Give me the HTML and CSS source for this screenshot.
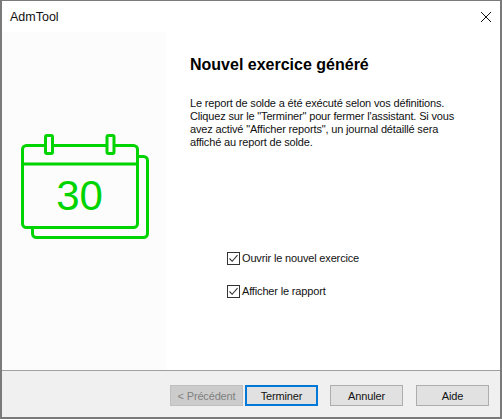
FILE: index.html
```html
<!DOCTYPE html>
<html>
    <head>
        <meta charset="utf-8">
        <title>AdmTool</title>
        <link rel="stylesheet" href="styles.css">
    </head>
    <body>
        <div class="window">
            <div class="titlebar">
                <span class="title">AdmTool</span>
                <svg class="close" width="10" height="10" viewBox="0 0 10 10">
                    <path d="M0 0L10 10M10 0L0 10" stroke="#111" stroke-width="1" fill="none"/>
                </svg>
            </div>
            <div class="content">
                <div class="side">
                    <svg class="calendar" width="129" height="106" viewBox="0 0 129 106">
                        <path d="M11.5 94v5.500a4 4 0 0 0 4 4h107a4 4 0 0 0 4-4V26.500a4 4 0 0 0-4-4H117" fill="none" stroke="#00d400" stroke-width="3"/>
                        <rect x="1.500" y="11.500" width="115" height="82" rx="4" fill="none" stroke="#00d400" stroke-width="3"/>
                        <path d="M1.500 30H116.500" stroke="#00d400" stroke-width="3"/>
                        <rect x="24.500" y="1.500" width="7" height="18" rx="1.500" fill="#fcfcfc" stroke="#00d400" stroke-width="3"/>
                        <rect x="86" y="1.500" width="7" height="18" rx="1.500" fill="#fcfcfc" stroke="#00d400" stroke-width="3"/>
                        <text class="day" x="58.500" y="76" text-anchor="middle">30</text>
                    </svg>
                </div>
                <div class="main">
                    <h1>Nouvel exercice généré</h1>
                    <p>Le report de solde a été exécuté selon vos définitions.<br>Cliquez sur le "Terminer" pour fermer l'assistant. Si vous<br>avez activé "Afficher reports", un journal détaillé sera<br>affiché au report de solde.</p>
                    <div class="options">
                        <label class="check">
                            <svg width="13" height="13" viewBox="0 0 13 13">
                                <rect x="0.5" y="0.5" width="12" height="12" fill="#fff" stroke="#333"/>
                                <path d="M2.5 6.5L5.2 9.300L10.500 3.200" fill="none" stroke="#333" stroke-width="1.100"/>
                            </svg>
                            Ouvrir le nouvel exercice
                        </label>
                        <label class="check">
                            <svg width="13" height="13" viewBox="0 0 13 13">
                                <rect x="0.5" y="0.5" width="12" height="12" fill="#fff" stroke="#333"/>
                                <path d="M2.5 6.5L5.2 9.300L10.500 3.200" fill="none" stroke="#333" stroke-width="1.100"/>
                            </svg>
                            Afficher le rapport
                        </label>
                    </div>
                </div>
            </div>
            <div class="footer">
                <button class="btn disabled">&lt; Précédent</button>
                <button class="btn default">Terminer</button>
                <button class="btn cancel">Annuler</button>
                <button class="btn">Aide</button>
            </div>
        </div>
    </body>
</html>
```

FILE: styles.css
```css
html, body{
    margin: 0;
    height: 100%;
    background-color: #fff;
}
.window{
    box-sizing: border-box;
    width: 502px;
    height: 419px;
    display: flex;
    flex-direction: column;
    border: solid 1px #7a7a7a;
    border-width: 1px 2px 2px 2px;
    background-color: #fff;
    font-family: "Liberation Sans", Arial, sans-serif;
    font-size: 11px;
    letter-spacing: -0.16px;
    color: #111;
}
.titlebar{
    height: 31px;
    flex: none;
    display: flex;
    align-items: center;
    justify-content: space-between;
    padding: 0 9px 0 8px;
}
.title{
    font-size: 12.5px;
    letter-spacing: 0;
}
.content{
    flex: 1;
    display: flex;
    min-height: 0;
}
.side{
    width: 164px;
    background-color: #fcfcfc;
    padding: 102px 0 0 19px;
    box-sizing: border-box;
}
.calendar{
    display: block;
    overflow: visible;
}
.day{
    font-family: "Liberation Sans", Arial, sans-serif;
    font-size: 42px;
    letter-spacing: 0;
    fill: #00d400;
}
.main{
    flex: 1;
    padding: 24px 0 0 24px;
}
h1{
    margin: 0;
    font-size: 16px;
    line-height: 18px;
    font-weight: bold;
    letter-spacing: 0;
    color: #000;
}
p{
    margin: 23px 0 0;
    line-height: 13px;
}
.options{
    margin: 102px 0 0 37px;
    display: flex;
    flex-direction: column;
    gap: 19px;
}
.check{
    display: flex;
    align-items: center;
    gap: 2px;
    height: 14px;
}
.footer{
    height: 47px;
    flex: none;
    box-sizing: border-box;
    display: flex;
    align-items: flex-start;
    padding: 14px 0 0 168px;
    background-color: #f0f0f0;
    border-top: solid 1px #a0a0a0;
}
.btn{
    box-sizing: border-box;
    width: 73px;
    height: 21px;
    margin-right: 2px;
    padding: 0;
    background-color: #e1e1e1;
    border: solid 1px #adadad;
    font-family: "Liberation Sans", Arial, sans-serif;
    font-size: 11px;
    letter-spacing: -0.16px;
    color: #111;
}
.disabled{
    background-color: #ccc;
    border-color: #bfbfbf;
    color: #808080;
}
.default{
    border: solid 2px #0078d7;
    margin-right: 12px;
}
.cancel{
    margin-right: 13px;
}
```
